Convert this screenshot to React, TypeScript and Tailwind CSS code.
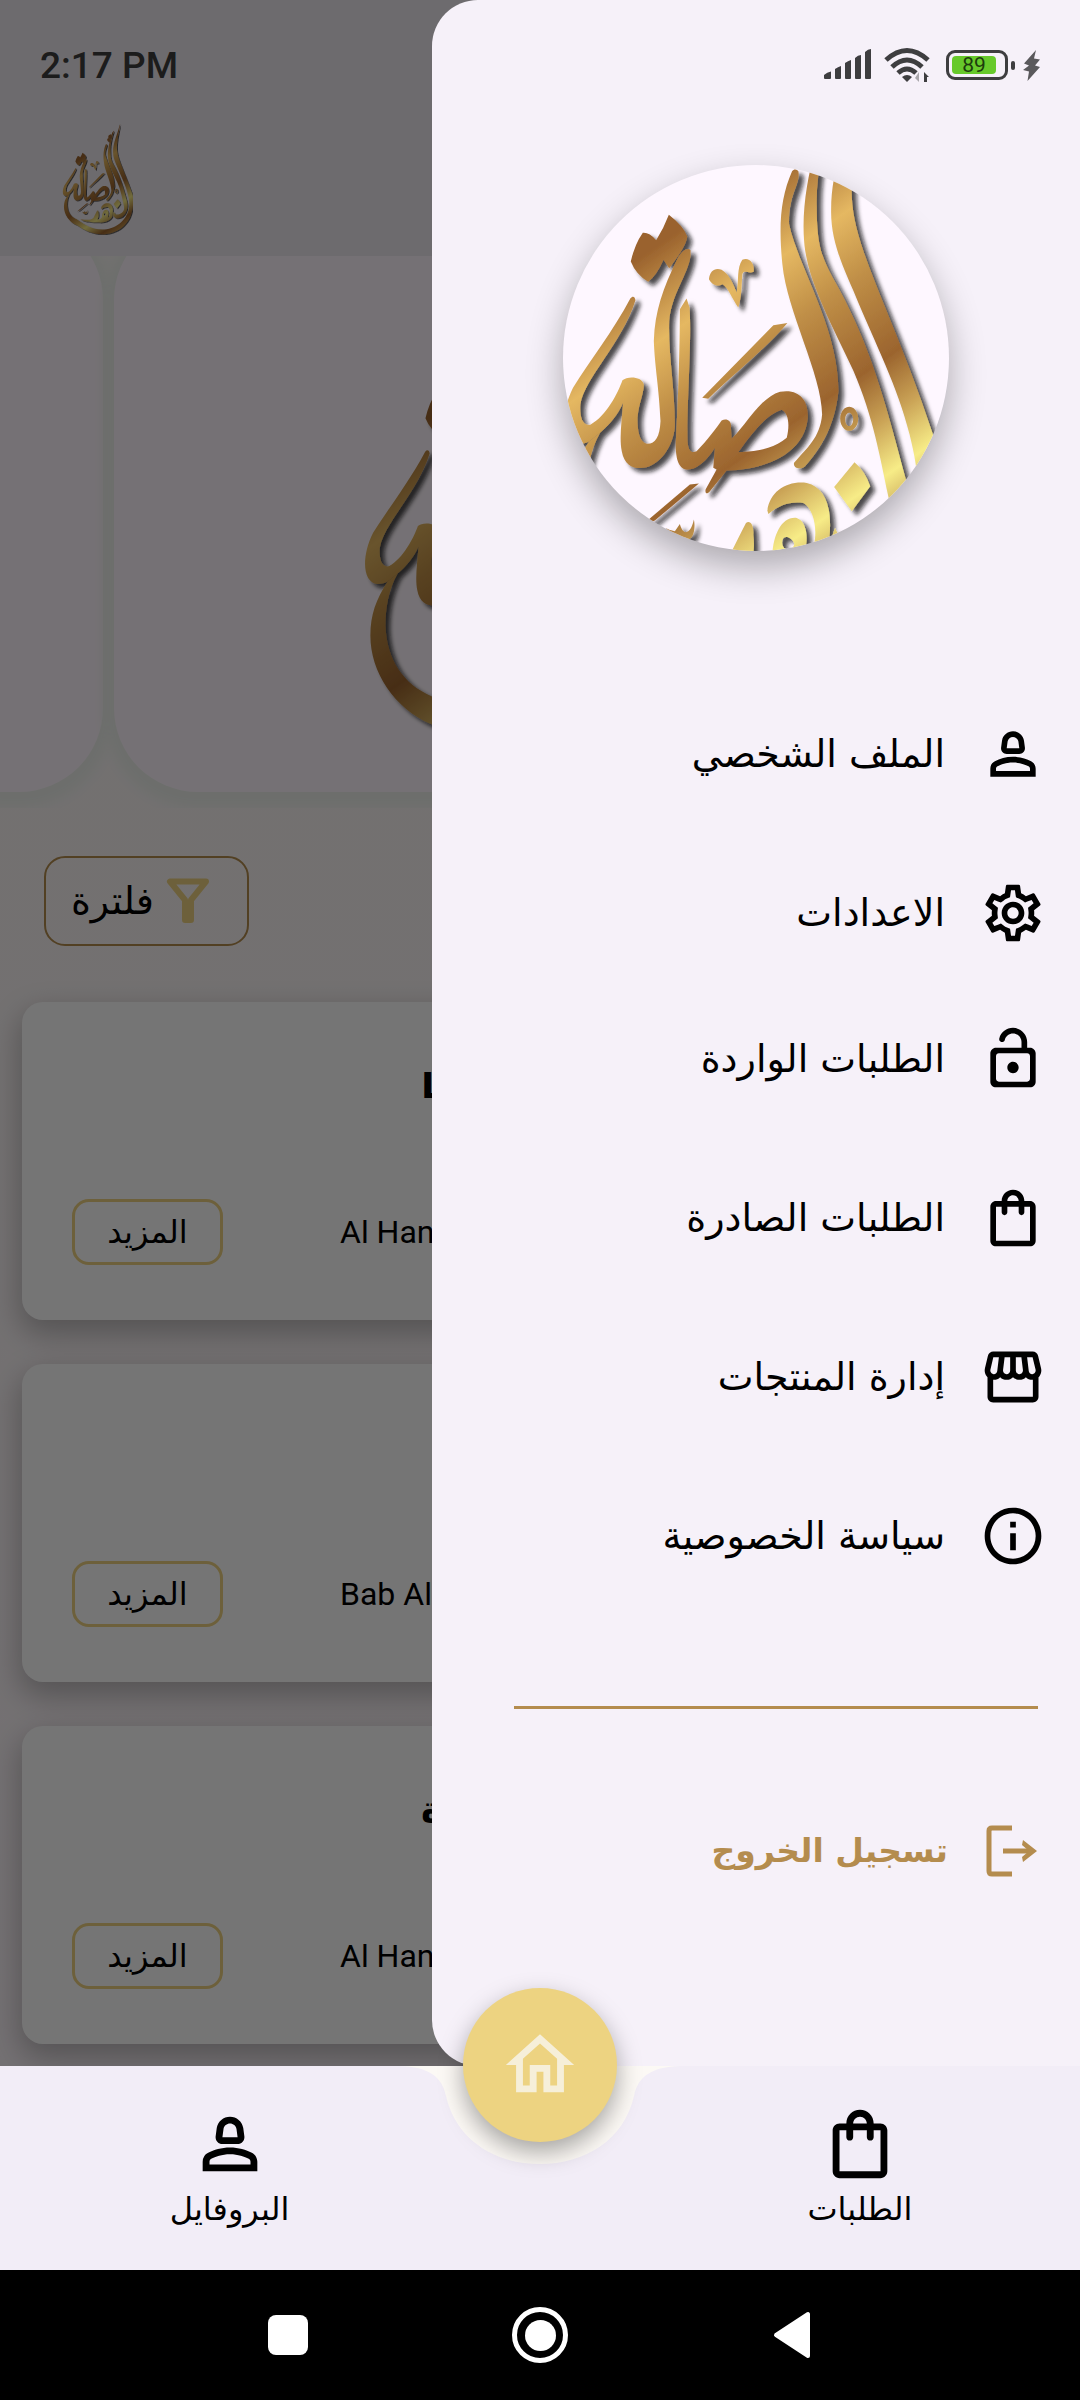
import { useId, type ReactNode } from "react";
import {
  MdInfoOutline,
  MdOutlinePerson2,
  MdOutlineSettings,
  MdOutlineShoppingBag,
  MdOutlineStorefront,
} from "react-icons/md";

const arabic = "font-['DejaVu_Sans',sans-serif]";

/* Calligraphic brand mark; the view box decides which part of it is shown. */
function Logo({ viewBox, className }: { viewBox: string; className: string }) {
  const id = useId().replace(/[^a-zA-Z0-9]/g, "");
  return (
    <svg viewBox={viewBox} className={className} role="img" aria-label="الشعار">
      <defs>
        <linearGradient id={`g${id}`} gradientUnits="userSpaceOnUse" x1="228" y1="329" x2="1053" y2="1521">
          <stop offset="0.04" stopColor="#9a622d" />
          <stop offset="0.205" stopColor="#e5b862" />
          <stop offset="0.33" stopColor="#c08f47" />
          <stop offset="0.5" stopColor="#9b642e" />
          <stop offset="0.6" stopColor="#c9a155" />
          <stop offset="0.7" stopColor="#f7ec87" />
          <stop offset="0.85" stopColor="#9b642e" />
          <stop offset="1" stopColor="#e5b862" />
        </linearGradient>
        <filter id={`s${id}`} x="-10%" y="-10%" width="125%" height="125%">
          <feDropShadow dx="15" dy="13" stdDeviation="7" floodColor="#10130f" floodOpacity="0.75" />
        </filter>
      </defs>
      <g fill={`url(#g${id})`} fillRule="evenodd" filter={`url(#s${id})`}>
        <path d="M986 -240C975 -130 928 20 935 170C942 330 1060 520 1178 880C1205 960 1195 1060 1180 1120C1140 1370 930 1518 700 1518C520 1518 400 1440 293 1373C170 1320 91 1200 91 1080C91 1010 110 960 148 901L181 875C150 930 141 990 141 1048C145 1160 200 1240 293 1280C420 1370 540 1440 700 1445C900 1440 1090 1310 1125 1100C1140 1040 1130 970 1108 880C1070 730 1010 620 940 450C900 360 872 290 873 210C872 60 940 -60 970 -190Z" />
        <path d="M890 -130C860 -40 826 90 830 200C830 330 850 360 900 450C990 620 1030 760 1097 1015C1120 1130 1060 1260 950 1265C880 1262 860 1215 885 1160C900 1200 930 1215 970 1200C1040 1170 1060 1130 1043 1060C1020 950 1000 830 940 690C880 560 800 420 792 300C780 140 840 -20 860 -100Z" />
        <path d="M775 92C782 130 745 160 747 250C775 380 895 560 895 750C885 850 845 920 795 975C780 988 758 980 762 965C800 920 840 890 846 820C845 700 740 510 727 370C715 250 722 170 756 92C762 84 770 86 775 92Z" />
        <path d="M830 -70C860 -90 845 -20 815 0C835 30 810 60 790 40C770 20 780 -10 800 -10C790 -40 800 -65 830 -70Z" />
        <path d="M387 222Q430 255 442 287Q440 315 388 382L371 357Q350 405 325 423Q288 400 273 362Q285 310 309 276Q328 274 349 298Q372 262 387 222Z" />
        <path d="M452 328C445 320 428 326 412 355C370 440 345 510 342 600C345 680 358 740 362 840C360 890 345 910 320 908C298 900 293 870 293 830C298 780 312 760 312 730C305 705 262 705 248 718C235 755 200 825 152 851C125 855 120 820 122 790C135 710 245 610 287 478C285 465 278 465 272 472C220 570 150 660 100 740C60 820 65 905 115 909C130 909 140 905 148 901L181 875C210 850 235 820 250 785C246 840 238 890 246 930C255 980 290 985 320 978C370 965 405 900 405 850C405 740 385 640 388 540C395 460 445 400 452 345Z" />
        <path d="M440 473L449 500C456 600 440 800 443 900C445 930 455 937 470 930C500 900 530 860 545 838C560 830 576 838 573 860L575 893C620 850 660 770 720 752C780 742 805 780 803 830C795 930 690 985 560 988L510 1050C500 1062 495 1055 497 1045L530 985L520 980L525 920C500 960 470 985 445 985C415 985 406 950 408 900C415 780 420 620 420 505ZM595 933C640 870 680 820 725 806C745 815 750 850 740 890C700 925 650 930 595 933Z" />
        <path d="M487 770L700 553L742 546C680 620 580 700 505 773Z" />
        <path d="M507 415C510 390 525 380 545 387C568 400 580 430 590 455C597 420 590 380 607 357C625 347 645 365 641 393C625 400 612 385 607 400C605 430 605 470 595 500C580 480 565 440 548 430C530 440 515 430 507 415Z" />
        <path d="M927 797a27 36 0 1 0 .1 0ZM927 815a12 20 0 1 1 -.1 0Z" />
        <path d="M943 963Q975 990 990 1035L935 1110L882 1037Z" />
        <path d="M300 1157L450 1030L477 1027L345 1138Z" />
        <path d="M378 1160L388 1165L405 1170L420 1148C430 1185 452 1180 462 1135C468 1165 460 1200 435 1197C410 1200 395 1180 378 1160Z" />
        <path d="M682 1108C690 1050 740 1018 800 1025C865 1040 882 1120 862 1230C840 1300 740 1340 640 1330C520 1325 440 1330 350 1280C440 1290 520 1300 560 1260C580 1220 600 1180 618 1145C630 1135 642 1150 640 1180C645 1220 640 1260 620 1285C660 1290 690 1270 697 1240C700 1180 725 1125 770 1130C800 1140 805 1190 795 1225L790 1260C840 1230 835 1110 790 1085C750 1080 720 1090 685 1118ZM730 1190C740 1182 755 1190 762 1205C765 1222 745 1225 735 1222C725 1215 724 1200 730 1190Z" />
      </g>
    </svg>
  );
}

function LockOpenIcon({ className }: { className?: string }) {
  return (
    <svg viewBox="0 0 24 24" fill="currentColor" className={className} aria-hidden="true">
      <path d="M12 13c-1.100 0-2 .9-2 2s.9 2 2 2 2-.9 2-2-.9-2-2-2zm6-5h-1V6c0-2.760-2.240-5-5-5-2.280 0-4.270 1.540-4.840 3.750-.14.54.18 1.080.72 1.220.53.14 1.080-.18 1.220-.72C9.440 3.930 10.630 3 12 3c1.650 0 3 1.350 3 3v2H6c-1.100 0-2 .9-2 2v10c0 1.100.9 2 2 2h12c1.100 0 2-.9 2-2V10c0-1.100-.9-2-2-2zm0 11c0 .55-.45 1-1 1H7c-.55 0-1-.45-1-1v-8c0-.55.45-1 1-1h10c.55 0 1 .45 1 1v8z" />
    </svg>
  );
}

function StatusIcons() {
  return (
    <div className="flex h-[130px] items-center justify-end pr-10 text-[#3e3e40]">
      <svg viewBox="0 0 48 32" fill="currentColor" className="h-8 w-12" aria-label="الإشارة">
        <path d="M0 26q3-3 7-3.500V29q0 1-1 1H1q-1 0-1-1zM11 20q3-2 6-3v12q0 1-1 1h-4q-1 0-1-1zM21 14q3-2 6-3v18q0 1-1 1h-4q-1 0-1-1zM31 9q3-3 6-3v23q0 1-1 1h-4q-1 0-1-1zM41 3q3-3 6-3v29q0 1-1 1h-4q-1 0-1-1z" />
      </svg>
      <svg viewBox="0 0 46 36" fill="none" stroke="currentColor" strokeWidth="5" className="ml-3 h-9 w-[46px]" aria-label="واي فاي">
        <path d="M2 13Q23-6 44 13M8 20Q23 6 38 20M14 26Q23 18 32 26" />
        <path d="M18 30Q23 26 28 30L23 35Z" fill="currentColor" stroke="none" />
        <path d="M35 25v10l-4-4z" fill="#a9a7ab" stroke="none" />
        <path d="M40 35V25l5 5h-2v5z" fill="currentColor" stroke="none" />
      </svg>
      <div className="ml-4 flex h-[30px] w-[62px] items-center rounded-[9px] border-[3px] border-[#3e3e40] p-[3px]">
        <span className="flex h-[18px] w-11 items-center justify-center rounded-sm bg-[#67c92b] font-[Roboto,sans-serif] text-[21px] leading-none text-[#1d3b0d]">
          89
        </span>
      </div>
      <span className="ml-[3px] h-[9px] w-1 rounded-full bg-[#3e3e40]" />
      <svg viewBox="0 0 17 31" fill="#5a595c" className="ml-2 h-[31px] w-[17px]" aria-label="شحن">
        <path d="M13 0L1 13.500l5 2L0 20l6 1.500L4.500 31L17 17l-5-1.500L17 9.500l-6-1z" />
      </svg>
    </div>
  );
}

type MenuItem = { label: string; icon: ReactNode; className: string };

const menu: MenuItem[] = [
  { label: "الملف الشخصي", icon: <MdOutlinePerson2 className="size-[68px]" />, className: "" },
  { label: "الاعدادات", icon: <MdOutlineSettings className="size-[68px]" />, className: "mt-[13px]" },
  { label: "الطلبات الواردة", icon: <LockOpenIcon className="size-[68px]" />, className: "" },
  { label: "الطلبات الصادرة", icon: <MdOutlineShoppingBag className="size-[68px]" />, className: "mt-[13px]" },
  { label: "إدارة المنتجات", icon: <MdOutlineStorefront className="size-[68px]" />, className: "mt-[13px]" },
  { label: "سياسة الخصوصية", icon: <MdInfoOutline className="size-[68px]" />, className: "mt-[13px]" },
];

const cards = [
  { title: "L", place: "Al Han" },
  { title: "", place: "Bab Al" },
  { title: "ة", place: "Al Han" },
];

function Card({ title, place }: { title: string; place: string }) {
  return (
    <article className="flex h-[318px] flex-col rounded-[21px] bg-white pr-6 pl-[50px] shadow-[0_12px_30px_2px_rgba(0,0,0,0.26)]">
      <h2 className={`mt-[54px] h-[60px] pl-[349px] text-[36px] leading-[60px] font-bold text-black ${arabic}`}>{title}</h2>
      <div className="mt-[83px] flex items-center gap-[117px]">
        <button
          type="button"
          className={`h-[66px] w-[151px] rounded-[17px] border-[3px] border-[#eed280] text-[32px] leading-none text-black ${arabic}`}
        >
          المزيد
        </button>
        <p className="font-[Roboto,sans-serif] text-[32px] leading-10 text-black">{place}</p>
      </div>
    </article>
  );
}

function Tab({ label, children }: { label: string; children: ReactNode }) {
  return (
    <a href="#" className="flex flex-col items-center pt-[37px] text-black">
      {children}
      <span className={`text-[32px] leading-12 ${arabic}`}>{label}</span>
    </a>
  );
}

export default function App() {
  return (
    <div className="flex min-h-screen flex-col bg-black">
      <div className="relative grow overflow-hidden">
        <div className="bg-linear-to-b from-[#f9f6f2] to-[#fcf5fa] pb-[22px]">
          <header className="relative z-10 bg-[#eee9ef] px-10 pt-11 pb-[21px]">
            <p className="font-[Roboto,sans-serif] text-[37px] leading-11 font-medium text-[#3d3d3d]">2:17 PM</p>
            <Logo viewBox="60 -250 1130 1780" className="mt-[35px] ml-[22px] h-[112px] w-[71px]" />
          </header>

          <section className="h-[552px] overflow-hidden" aria-label="العروض">
            <div className="-mt-10 flex h-[576px] gap-[11px]">
              <div className="w-[103px] rounded-r-[84px] bg-[#fff7fe] shadow-[0_6px_12px_10px_#edf0ec]" />
              <div className="flex grow justify-center rounded-[84px] bg-[#fff7fe] pt-[17px] shadow-[0_6px_12px_10px_#edf0ec]">
                <Logo viewBox="60 -250 1130 1780" className="h-[539px] w-[342px]" />
              </div>
              <div className="w-[119px] rounded-l-[84px] bg-[#fff7fe]" />
            </div>
          </section>

          <button
            type="button"
            dir="rtl"
            className="mt-12 ml-11 flex h-[90px] w-[205px] items-center gap-3 rounded-[21px] border-2 border-[#b48c4e] pr-[37px]"
          >
            <svg viewBox="0 0 44 46" className="h-[46px] w-11" aria-hidden="true">
              <path d="M4 3.500H40L25 22V42H19V22Z" fill="none" stroke="#eed280" strokeWidth="6" strokeLinejoin="round" />
              <path d="M17 24h10v20H17z" fill="#eed280" />
            </svg>
            <span className={`text-[38px] leading-none text-black ${arabic}`}>فلترة</span>
          </button>

          <div className="mt-14 flex flex-col gap-11 px-[22px]">
            {cards.map((card, i) => (
              <Card key={i} {...card} />
            ))}
          </div>
        </div>

        <div className="absolute inset-0 z-20 bg-black/54" />

        <aside dir="rtl" className="absolute inset-y-0 right-0 z-30 w-3/5 rounded-l-[46px] bg-[#f6f1f9]">
          <div dir="ltr">
            <StatusIcons />
          </div>
          <div className="mx-auto mt-[35px] size-[386px] overflow-hidden rounded-full bg-[#fef7ff] shadow-[0_16px_36px_rgba(0,0,0,0.3)]">
            <Logo viewBox="70 73 1156 1156" className="size-full" />
          </div>
          <nav className="mt-[130px]" aria-label="القائمة">
            <ul>
              {menu.map((item) => (
                <li key={item.label} className={item.className}>
                  <a href="#" className="flex h-[146px] items-center gap-[34px] pr-[33px] text-black">
                    {item.icon}
                    <span className={`text-[38px] leading-[60px] ${arabic}`}>{item.label}</span>
                  </a>
                </li>
              ))}
            </ul>
          </nav>
          <hr className="mt-[97px] mr-[42px] ml-[82px] border-t-[3px] border-[#b48c4e]" />
          <button type="button" className="mt-[102px] flex h-20 items-center gap-[38px] pr-[42px] text-[#b48c4e]">
            <svg viewBox="0 0 52 52" fill="none" stroke="currentColor" strokeWidth="5" className="size-[52px]" aria-hidden="true">
              <path d="M26 3H6Q3 3 3 6V46Q3 49 6 49H26M17 26H46" />
              <path d="M37 15L51 26L37 37L36 32L43 26L36 20Z" fill="currentColor" stroke="none" />
            </svg>
            <span className={`text-[33px] leading-[60px] font-bold ${arabic}`}>تسجيل الخروج</span>
          </button>
        </aside>
      </div>

      <nav className="relative z-40 grid h-[204px] grid-cols-[459fr_181fr_440fr] bg-[#f2edf7]" aria-label="التنقل">
        <Tab label="البروفايل">
          <MdOutlinePerson2 className="size-[82px]" />
        </Tab>
        <div />
        <Tab label="الطلبات">
          <MdOutlineShoppingBag className="size-[82px]" />
        </Tab>
        <svg viewBox="0 0 280 100" className="absolute top-0 left-1/2 h-[100px] w-[280px] -translate-x-1/2" aria-hidden="true">
          <path d="M0 0C28 1 42 10 46 30C56 74 95 98 140 98S224 74 234 30C238 10 252 1 280 0Z" fill="#fcf9f5" />
        </svg>
        <button
          type="button"
          aria-label="الرئيسية"
          className="absolute -top-[78px] left-1/2 flex size-[154px] -translate-x-1/2 items-center justify-center rounded-full bg-[#edd381] text-[#f6efd9] shadow-[0_10px_24px_rgba(0,0,0,0.34)]"
        >
          <svg viewBox="0 0 24 24" fill="currentColor" className="size-[82px]" aria-hidden="true">
            <path d="M12 5.690l5 4.500V18h-2v-6H9v6H7v-7.810l5-4.500M12 3L2 12h3v8h6v-6h2v6h6v-8h3L12 3z" />
          </svg>
        </button>
      </nav>

      <div className="mx-auto grid h-[130px] w-[70%] grid-cols-3 place-items-center">
        <button type="button" aria-label="التطبيقات الأخيرة" className="size-10 rounded-lg bg-white" />
        <button type="button" aria-label="الشاشة الرئيسية" className="flex size-14 items-center justify-center rounded-full border-[5px] border-white">
          <span className="size-[31px] rounded-full bg-white" />
        </button>
        <button type="button" aria-label="رجوع">
          <svg viewBox="0 0 38 48" className="h-12 w-[38px]" aria-hidden="true">
            <path d="M3 24L35 3V45Z" fill="white" stroke="white" strokeWidth="4" strokeLinejoin="round" />
          </svg>
        </button>
      </div>
    </div>
  );
}
